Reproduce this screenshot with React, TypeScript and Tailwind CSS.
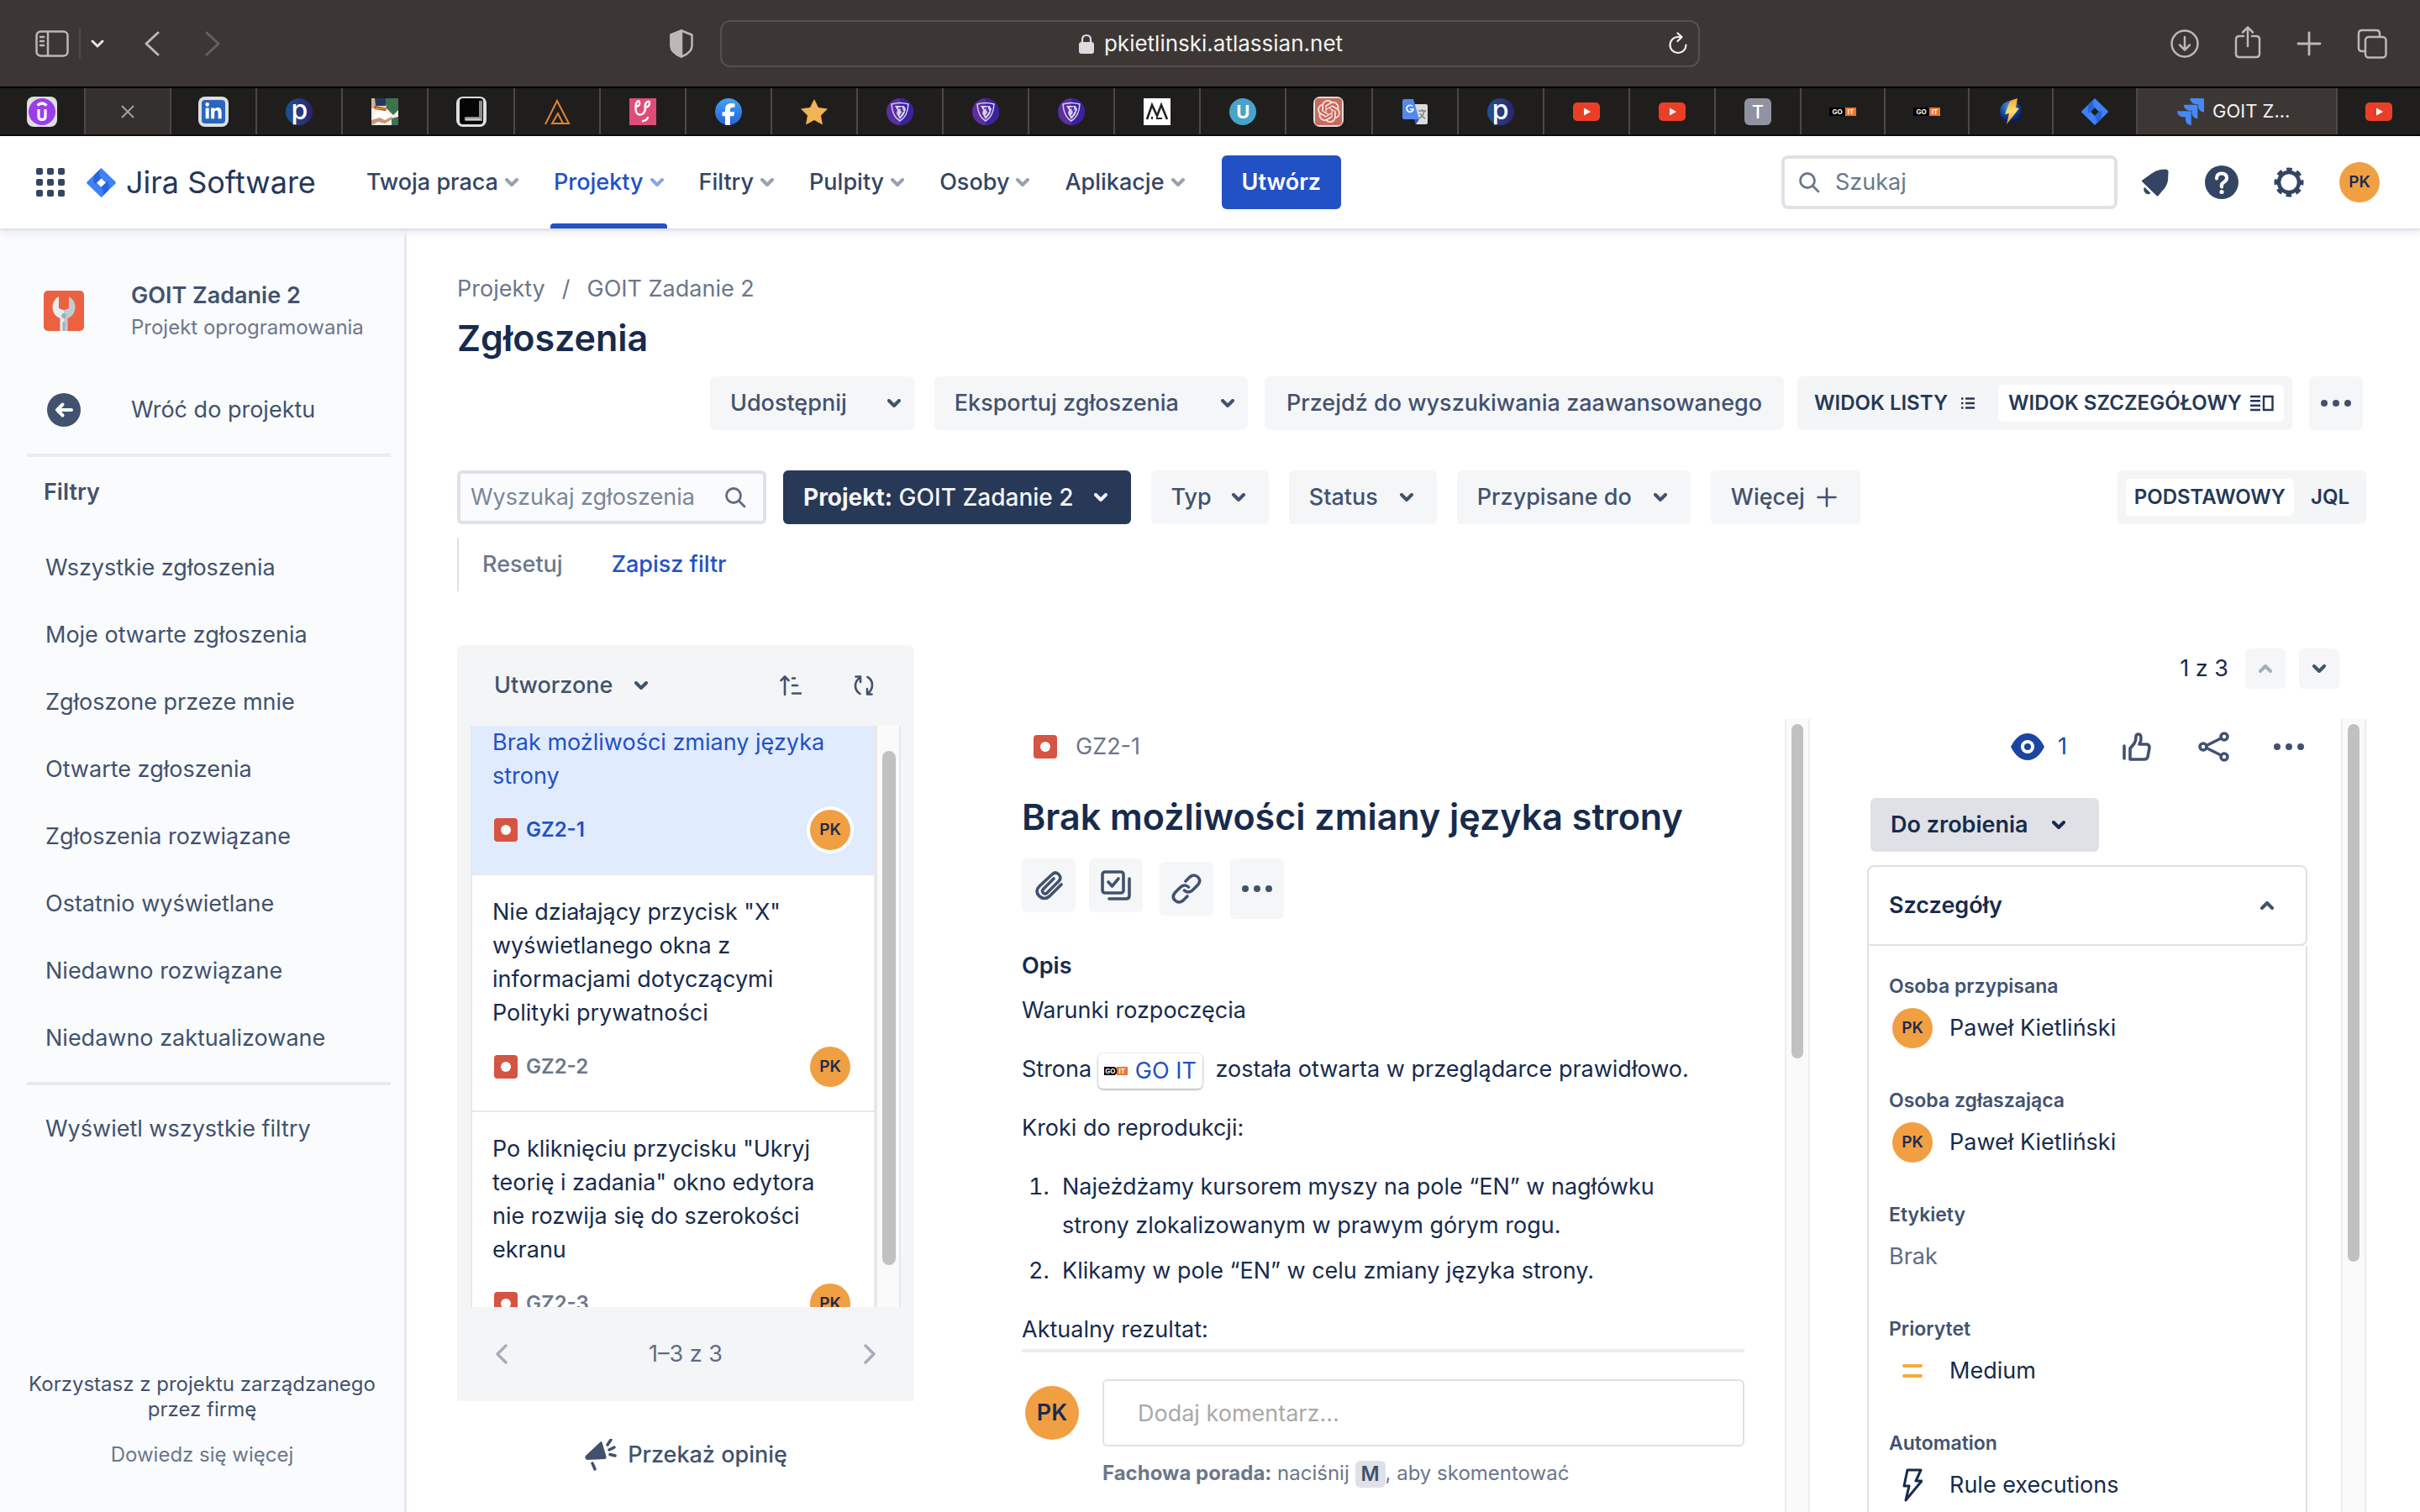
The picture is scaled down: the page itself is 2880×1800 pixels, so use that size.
import React from "react";
import { FaLinkedinIn, FaFacebookF } from "react-icons/fa6";
import { SiOpenai } from "react-icons/si";

type Kids = { children?: React.ReactNode };

function Chevron({ dir = "down", className = "" }: { dir?: "down" | "up"; className?: string }) {
  return (
    <svg viewBox="0 0 16 10" className={"h-[10px] w-4 shrink-0 " + className} fill="none" stroke="currentColor" strokeWidth="4" strokeLinecap="round" strokeLinejoin="round" aria-hidden="true">
      <path d={dir === "down" ? "M2 2l6 6 6-6" : "M2 8l6-6 6 6"} />
    </svg>
  );
}

function Dots({ className = "" }: { className?: string }) {
  return (
    <svg viewBox="0 0 36 8" className={"h-2 w-9 shrink-0 " + className} fill="currentColor" aria-hidden="true">
      <circle cx="4" cy="4" r="4" />
      <circle cx="18" cy="4" r="4" />
      <circle cx="32" cy="4" r="4" />
    </svg>
  );
}

function SearchIcon() {
  return (
    <svg viewBox="0 0 26 26" className="h-[26px] w-[26px] shrink-0" fill="none" stroke="currentColor" strokeWidth="2.800" strokeLinecap="round" aria-hidden="true">
      <circle cx="11" cy="11" r="8.500" />
      <path d="M17.500 17.500l6.500 6.500" />
    </svg>
  );
}

function BugIcon() {
  return (
    <svg viewBox="0 0 28 28" className="h-7 w-7 shrink-0" role="img" aria-label="Błąd">
      <rect width="28" height="28" rx="4" fill="#d55442" />
      <circle cx="14" cy="14" r="6" fill="#fff" />
    </svg>
  );
}

function Avatar({ size = "md", ring = false }: { size?: "md" | "lg"; ring?: boolean }) {
  return (
    <span
      className={
        "flex shrink-0 items-center justify-center rounded-full bg-[#f19f43] font-semibold text-[#1c2b4d] " +
        (size === "lg" ? "h-16 w-16 text-[27px] " : "h-12 w-12 text-[19px] ") +
        (ring ? "ring-4 ring-white" : "")
      }
    >
      PK
    </span>
  );
}

/* ---------- tab icons ---------- */

function Plate({ children }: Kids) {
  return <span className="flex h-9 w-9 items-center justify-center overflow-hidden rounded-lg bg-[#dedede]">{children}</span>;
}

function UpIcon() {
  return (
    <Plate>
      <svg viewBox="0 0 32 32" className="h-8 w-8">
        <circle cx="16" cy="16" r="16" fill="#9b3de8" />
        <path d="M10.500 8.500q5.500-5 11 0M12 13v8.500q0 4 4 4t4-4V13" fill="none" stroke="#fff" strokeWidth="3.200" />
      </svg>
    </Plate>
  );
}

function LinkedinTab() {
  return (
    <Plate>
      <span className="flex h-7 w-7 items-center justify-center rounded-sm bg-[#2a66c0] text-white">
        <FaLinkedinIn size={22} />
      </span>
    </Plate>
  );
}

function PIcon() {
  return (
    <span className="flex h-8 w-8 items-center justify-center rounded-full bg-linear-to-r from-[#1f5190] to-[#28246e] pb-1 text-[32px] leading-none font-medium text-white">
      p
    </span>
  );
}

function PhotoTab() {
  return (
    <svg viewBox="0 0 32 32" className="h-8 w-8">
      <rect width="32" height="32" fill="#f3eee8" />
      <path d="M16 0h16v14l-6 6-8-8zM24 24l8-2v10h-8z" fill="#3b7350" />
      <path d="M0 0h5v12H0z" fill="#cdb98f" />
      <path d="M4 0h13v9H5z" fill="#223a5c" />
      <path d="M3 9l15 2-1 4-13-2z" fill="#c53b2c" />
      <path d="M5 12h12" stroke="#e0a53a" strokeWidth="1.500" />
      <path d="M5 15h11l8 7-4 6-12 2-5-8z" fill="#fff" />
      <path d="M0 26l10-3 6 3 8-4 2 2-10 6-8-2-8 4z" fill="#c99672" />
    </svg>
  );
}

function BookTab() {
  return (
    <Plate>
      <svg viewBox="0 0 32 34" className="h-[34px] w-8">
        <rect x="2" y="1" width="28" height="31" rx="4" fill="#050505" />
        <path d="M25 4h4v24H9a3 3 0 0 1 0-5h16z" fill="#8c8c8c" />
        <path d="M9 26h18" stroke="#dcdcdc" strokeWidth="1.500" />
      </svg>
    </Plate>
  );
}

function TriangleTab() {
  return (
    <svg viewBox="0 0 32 32" className="h-8 w-8" fill="none" stroke="#e08434" strokeWidth="2">
      <path d="M2 31L16 3l14 27H10l7-12 6 12" />
    </svg>
  );
}

function PinkTab() {
  return (
    <svg viewBox="0 0 32 32" className="h-8 w-8" fill="none" stroke="#fff" strokeWidth="2.400" strokeLinecap="round">
      <rect width="32" height="32" fill="#e04c78" stroke="none" />
      <path d="M8 10q5-1 4-5t-4 1q-1 6 0 10 2 5 7 3 4-2 4-8V7" />
      <path d="M19 11q5-1 5-5t-4-1q-2 3-1 9M16 27q4 0 6-4" />
    </svg>
  );
}

function FacebookTab() {
  return (
    <span className="flex h-8 w-8 items-end justify-center overflow-hidden rounded-full bg-linear-to-b from-[#45a2f5] to-[#2860d8] text-white">
      <FaFacebookF size={26} />
    </span>
  );
}

function StarTab() {
  return (
    <svg viewBox="0 0 34 32" className="h-8 w-[34px]" fill="#f0b356">
      <path d="M17 1l5 10 11 1.500-8 8 2 11-10-5.500L7 31.500l2-11-8-8L12 11z" strokeLinejoin="round" />
    </svg>
  );
}

function ShieldTab() {
  return (
    <svg viewBox="0 0 32 32" className="h-8 w-8">
      <circle cx="16" cy="16" r="16" fill="#5a2f9e" />
      <path d="M16 0a16 16 0 0 1 0 32z" fill="#3a229c" />
      <path d="M6 7q10-3 20 0-1 15-10 20Q7 22 6 7z" fill="none" stroke="#d9d0f2" strokeWidth="1.500" />
      <path d="M10 9h11l2 4-2 6-5 6-4-7 1-4z" fill="#d9d0f2" />
      <path d="M14 12l4-1-1 3 2 2-3 5M18 11l2 5" fill="none" stroke="#4626a0" strokeWidth="1.300" />
    </svg>
  );
}

function MountainTab() {
  return (
    <svg viewBox="0 0 32 32" className="h-8 w-8" fill="none" stroke="#222" strokeWidth="2.600">
      <rect width="32" height="32" fill="#fff" stroke="none" />
      <path d="M4 25L10 8l6 13 5-13 7 17" />
      <path d="M10 25v-3M15 24h7" strokeWidth="2" />
    </svg>
  );
}

function UTab() {
  return (
    <span className="flex h-8 w-8 items-center justify-center rounded-full bg-[#47a3cc] text-[22px] leading-none font-bold text-white">U</span>
  );
}

function KnotTab() {
  return (
    <Plate>
      <span className="flex h-8 w-8 items-center justify-center rounded-sm bg-[#cb6a5c] text-[#efe3de]">
        <SiOpenai size={27} />
      </span>
    </Plate>
  );
}

function TranslateTab() {
  return (
    <svg viewBox="0 0 32 32" className="h-8 w-8">
      <path d="M12 7h17a2 2 0 0 1 2 2v20a2 2 0 0 1-2 2H17z" fill="#dcdcdc" />
      <path d="M17 31l4-6h-6z" fill="#3c4fc4" />
      <path d="M3 1h11l7 24H3a2 2 0 0 1-2-2V3a2 2 0 0 1 2-2z" fill="#5389ec" />
      <path d="M20 15h9M24.500 13v2M27 15q-1 6-6 9M22 18q2 4 6 6" fill="none" stroke="#71828b" strokeWidth="1.500" />
      <path d="M13 9.500a4 4 0 1 0 1 3.500h-4" fill="none" stroke="#fff" strokeWidth="1.700" />
    </svg>
  );
}

function YoutubeTab() {
  return (
    <svg viewBox="0 0 32 22" className="h-[22px] w-8">
      <rect width="32" height="22" rx="5" fill="#ea3f27" />
      <path d="M13 6.500l8 4.500-8 4.500z" fill="#fff" />
    </svg>
  );
}

function TTab() {
  return <span className="flex h-8 w-8 items-center justify-center rounded-md bg-[#9192a0] text-[22px] leading-none font-medium text-white">T</span>;
}

function GoitMark({ small = false }: { small?: boolean }) {
  return (
    <span className={"flex items-center text-[8px] leading-none font-bold text-white " + (small ? "h-[10px] w-7" : "h-[10px] w-8")}>
      <span className="flex h-full flex-1 items-center justify-center rounded-r-sm bg-black">GO</span>
      <span className="flex h-full w-[13px] items-center justify-center bg-[#e8762f]">IT</span>
    </span>
  );
}

function BoltTab() {
  return (
    <svg viewBox="0 0 32 32" className="h-8 w-8">
      <defs>
        <radialGradient id="orb" cx="0.4" cy="0.25" r="0.8">
          <stop offset="0" stopColor="#4d94dc" />
          <stop offset="0.600" stopColor="#123a8e" />
          <stop offset="1" stopColor="#040f4a" />
        </radialGradient>
        <linearGradient id="flash" x1="0" y1="0" x2="0" y2="1">
          <stop offset="0" stopColor="#f5a13a" />
          <stop offset="0.500" stopColor="#fbe06a" />
          <stop offset="1" stopColor="#f08a2c" />
        </linearGradient>
      </defs>
      <circle cx="16" cy="16" r="13" fill="url(#orb)" />
      <path d="M15 3l9-3-2 11 4 1-15 19 3-13-5 1z" fill="url(#flash)" />
    </svg>
  );
}

function Diamond({ className }: { className: string }) {
  return (
    <svg viewBox="0 0 36 36" className={className} aria-hidden="true">
      <path fillRule="evenodd" d="M18 0l17 16.500a2 2 0 0 1 0 3L18 36 1 19.500a2 2 0 0 1 0-3zM18 12.500L12.500 18l5.500 5.500 5.500-5.500z" fill="#3f82f7" />
      <path d="M18 0q-5 6 0 12.500L10 20q-3-6 0-12z" fill="#2763dc" />
      <path d="M18 36q5-6 0-12.500l8-7.500q3 6 0 12z" fill="#2763dc" />
    </svg>
  );
}

function JiraTab() {
  return (
    <svg viewBox="0 0 24 24" className="h-8 w-8 shrink-0" fill="#4688f5" aria-hidden="true">
      <path d="M11.571 11.513H0a5.218 5.218 0 0 0 5.232 5.215h2.130v2.057A5.215 5.215 0 0 0 12.575 24V12.518a1.005 1.005 0 0 0-1.005-1.005zm5.723-5.756H5.736a5.215 5.215 0 0 0 5.215 5.214h2.129v2.058a5.218 5.218 0 0 0 5.215 5.214V6.758a1.001 1.001 0 0 0-1.001-1.001zM23.013 0H11.455a5.215 5.215 0 0 0 5.215 5.215h2.129v2.057A5.215 5.215 0 0 0 24 12.483V1.005A1.001 1.001 0 0 0 23.013 0Z" />
    </svg>
  );
}

const wideTabs: [string, React.ReactNode][] = [
  ["LinkedIn", <LinkedinTab />],
  ["P", <PIcon />],
  ["Zdjęcie", <PhotoTab />],
  ["Książka", <BookTab />],
  ["Trójkąt", <TriangleTab />],
  ["Kurs", <PinkTab />],
  ["Facebook", <FacebookTab />],
  ["Ulubione", <StarTab />],
  ["Tarcza 1", <ShieldTab />],
  ["Tarcza 2", <ShieldTab />],
  ["Tarcza 3", <ShieldTab />],
  ["Góra", <MountainTab />],
  ["U", <UTab />],
  ["Czat", <KnotTab />],
  ["Tłumacz", <TranslateTab />],
  ["P 2", <PIcon />],
  ["YouTube 1", <YoutubeTab />],
  ["YouTube 2", <YoutubeTab />],
  ["T", <TTab />],
];

const narrowTabs: [string, React.ReactNode][] = [
  ["GO IT 1", <GoitMark />],
  ["GO IT 2", <GoitMark />],
  ["Błyskawica", <BoltTab />],
  ["Jira", <Diamond className="h-8 w-8" />],
];

function Tab({ label, narrow = false, last = false, children }: { label: string; narrow?: boolean; last?: boolean } & Kids) {
  return (
    <button
      type="button"
      aria-label={label}
      className={
        "flex h-full min-w-0 items-center justify-center border-[#4b4846] bg-[#201e1d] " +
        (narrow ? "flex-[100] " : "flex-[102] ") +
        (last ? "" : "border-r-2")
      }
    >
      {children}
    </button>
  );
}

function BrowserChrome() {
  return (
    <div className="shrink-0">
      <div className="grid h-[103px] grid-cols-[857fr_1166fr_857fr] items-center bg-[#3c3734] text-[#bcb8b5]">
        <div className="flex items-center pr-8 pl-[42px]">
          <button type="button" aria-label="Pasek boczny">
            <svg viewBox="0 0 40 32" className="h-8 w-10" fill="none" stroke="currentColor" strokeWidth="2.500" strokeLinecap="round">
              <rect x="1.500" y="1.500" width="37" height="29" rx="5" />
              <path d="M15 2v28M6 8h4M6 13h4M6 18h4" />
            </svg>
          </button>
          <span className="mx-3 h-9 w-[2px] bg-[#504b48]" />
          <button type="button" aria-label="Grupy kart" className="text-[#e6e3e1]">
            <svg viewBox="0 0 16 10" className="h-[10px] w-4" fill="none" stroke="currentColor" strokeWidth="3" strokeLinecap="round" strokeLinejoin="round">
              <path d="M2 2l6 6 6-6" />
            </svg>
          </button>
          <button type="button" aria-label="Wstecz" className="ml-12">
            <svg viewBox="0 0 18 30" className="h-[30px] w-[18px]" fill="none" stroke="currentColor" strokeWidth="3" strokeLinecap="round" strokeLinejoin="round">
              <path d="M16 2L2 15l14 13" />
            </svg>
          </button>
          <button type="button" aria-label="Dalej" className="ml-[54px] text-[#66615e]">
            <svg viewBox="0 0 18 30" className="h-[30px] w-[18px]" fill="none" stroke="currentColor" strokeWidth="3" strokeLinecap="round" strokeLinejoin="round">
              <path d="M2 2l14 13L2 28" />
            </svg>
          </button>
          <button type="button" aria-label="Raport prywatności" className="ml-auto">
            <svg viewBox="0 0 28 34" className="h-[34px] w-7" fill="none" stroke="currentColor" strokeWidth="2.500" strokeLinejoin="round">
              <path d="M14 1.500l12.500 5v13q0 8-12.500 13Q1.500 27.500 1.500 19.500v-13z" />
              <path d="M14 1.500v31Q1.500 27.500 1.500 19.500v-13z" fill="currentColor" />
            </svg>
          </button>
        </div>
        <div className="flex h-14 items-center rounded-xl border-2 border-[#55504d] px-3 text-[26px] text-[#f4f2f1]">
          <span className="flex flex-1 items-center justify-center gap-3 pl-[26px]">
            <svg viewBox="0 0 18 24" className="h-6 w-[18px]" aria-hidden="true">
              <rect x="0" y="10" width="18" height="14" rx="3" fill="#dedbe0" />
              <path d="M4 11V7q0-5 5-5t5 5v4" fill="none" stroke="#dedbe0" strokeWidth="2.200" />
            </svg>
            pkietlinski.atlassian.net
          </span>
          <button type="button" aria-label="Odśwież">
            <svg viewBox="0 0 24 28" className="h-7 w-6" fill="none" stroke="currentColor" strokeWidth="2.200" strokeLinecap="round" strokeLinejoin="round">
              <path d="M21.500 15.500a9.500 9.500 0 1 1-9.500-9.500h4M11.500 1.500L16.500 6l-5 5" />
            </svg>
          </button>
        </div>
        <div className="flex items-center justify-end gap-[41px] pr-[39px]">
          <button type="button" aria-label="Pobrane">
            <svg viewBox="0 0 36 36" className="h-9 w-9" fill="none" stroke="currentColor" strokeWidth="2.500" strokeLinecap="round" strokeLinejoin="round">
              <circle cx="18" cy="18" r="15.500" />
              <path d="M18 10v15M12 19.500l6 6 6-6" />
            </svg>
          </button>
          <button type="button" aria-label="Udostępnij stronę">
            <svg viewBox="0 0 32 40" className="mb-1 h-10 w-8" fill="none" stroke="currentColor" strokeWidth="2.500" strokeLinecap="round" strokeLinejoin="round">
              <path d="M11 13H6q-4 0-4 4v17q0 4 4 4h20q4 0 4-4V17q0-4-4-4h-5M16 25V3M10 8.500L16 2.500l6 6" />
            </svg>
          </button>
          <button type="button" aria-label="Nowa karta">
            <svg viewBox="0 0 32 32" className="h-8 w-8" fill="none" stroke="currentColor" strokeWidth="2.800" strokeLinecap="round">
              <path d="M16 3v26M3 16h26" />
            </svg>
          </button>
          <button type="button" aria-label="Przegląd kart">
            <svg viewBox="0 0 36 36" className="h-9 w-9" fill="none" stroke="currentColor" strokeWidth="2.500" strokeLinejoin="round">
              <rect x="10" y="10" width="24.500" height="24.500" rx="4" />
              <path d="M9 27H6q-4 0-4-4V6q0-4 4-4h17q4 0 4 4v3" />
            </svg>
          </button>
        </div>
      </div>
      <div className="flex h-[59px] border-y-2 border-black bg-[#201e1d]">
        <Tab label="Upwork"><UpIcon /></Tab>
        <button type="button" aria-label="Zamknij kartę" className="flex h-full flex-[102] items-center justify-center border-r-2 border-[#4b4846] bg-[#34302e] text-[#a5a19f]">
          <svg viewBox="0 0 16 16" className="h-4 w-4" fill="none" stroke="currentColor" strokeWidth="2">
            <path d="M1 1l14 14M15 1L1 15" />
          </svg>
        </button>
        {wideTabs.map(([label, icon]) => (
          <Tab key={label} label={label}>{icon}</Tab>
        ))}
        {narrowTabs.map(([label, icon]) => (
          <Tab key={label} label={label} narrow>{icon}</Tab>
        ))}
        <button type="button" className="flex h-full flex-[240] items-center justify-center border-r-2 border-[#4b4846] bg-[#3c3734] text-[22px] text-[#f4f2f1]">
          <span className="flex items-center gap-[10px] pr-2">
            <JiraTab />
            GOIT Z...
          </span>
        </button>
        <Tab label="YouTube 3" narrow last><YoutubeTab /></Tab>
      </div>
    </div>
  );
}

/* ---------- Jira header ---------- */

const navItems = ["Twoja praca", "Projekty", "Filtry", "Pulpity", "Osoby", "Aplikacje"];

function JiraHeader() {
  return (
    <header className="relative z-10 flex h-[110px] shrink-0 items-center bg-white pr-12 pl-[43px] shadow-[0_2px_2px_#dcdee3,0_6px_8px_#eceef2]">
      <button type="button" aria-label="Przełącznik aplikacji" className="mr-[26px] text-[#344563]">
        <svg viewBox="0 0 34 34" className="h-[34px] w-[34px]" fill="currentColor">
          {[0, 13, 26].map((y) => [0, 13, 26].map((x) => <rect key={x + "-" + y} x={x} y={y} width="8" height="8" rx="2" />))}
        </svg>
      </button>
      <a href="#jira" className="flex items-center gap-3 text-[36px] text-[#253858]">
        <Diamond className="h-[35px] w-[35px]" />
        Jira Software
      </a>
      <nav className="ml-[60px] flex h-full items-center gap-[42px]">
        {navItems.map((item) => {
          const active = item === "Projekty";
          return (
            <button
              key={item}
              type="button"
              className={"relative flex h-full items-center gap-2 text-[27px] font-medium " + (active ? "text-[#2251c5]" : "text-[#344563]")}
            >
              {item}
              <Chevron className="opacity-50" />
              {active && <span className="absolute -inset-x-1 bottom-0 h-[6px] rounded-t-sm bg-[#2251c5]" />}
            </button>
          );
        })}
      </nav>
      <button type="button" className="ml-11 h-16 rounded-md bg-[#2251c5] px-6 text-[27px] font-semibold text-white">Utwórz</button>
      <label className="ml-auto flex h-16 w-[400px] items-center gap-[18px] rounded-lg border-4 border-[#dfe1e6] px-4 text-[#6b778c]">
        <SearchIcon />
        <input type="text" aria-label="Szukaj" placeholder="Szukaj" className="w-full min-w-0 bg-transparent text-[27px] outline-none placeholder:text-[#6b778c]" />
      </label>
      <div className="ml-7 flex items-center gap-[42px] text-[#344563]">
        <button type="button" aria-label="Powiadomienia">
          <svg viewBox="0 0 34 34" className="h-[34px] w-[34px]" fill="currentColor">
            <path d="M30 1.500q3 1 2.500 4l-.500 9q-1 7-6 12l-5.500 6.500q-1 1-2 0L1.500 16.500q-1-1 0-2L12 7q5-4 11-5z" />
            <path d="M4 22.500l7.500 7.500q-3 2.500-6 0-3.500-3-1.500-7.500z" />
          </svg>
        </button>
        <button type="button" aria-label="Pomoc">
          <svg viewBox="0 0 40 40" className="h-10 w-10" fill="none">
            <circle cx="20" cy="20" r="20" fill="currentColor" />
            <path d="M14 15.500q0-6 6-6t6 5.500q0 3-3.500 5T20 25.500" stroke="#fff" strokeWidth="4" strokeLinecap="round" />
            <circle cx="20" cy="31.500" r="2.600" fill="#fff" />
          </svg>
        </button>
        <button type="button" aria-label="Ustawienia">
          <svg viewBox="0 0 36 36" className="h-9 w-9" fill="none" stroke="currentColor">
            <circle cx="18" cy="18" r="12" strokeWidth="4.500" />
            <circle cx="18" cy="18" r="15.500" strokeWidth="4" strokeDasharray="6.600 5.573" strokeDashoffset="3.300" />
          </svg>
        </button>
        <button type="button" aria-label="Twój profil"><Avatar /></button>
      </div>
    </header>
  );
}

/* ---------- sidebar ---------- */

const filters = [
  "Wszystkie zgłoszenia",
  "Moje otwarte zgłoszenia",
  "Zgłoszone przeze mnie",
  "Otwarte zgłoszenia",
  "Zgłoszenia rozwiązane",
  "Ostatnio wyświetlane",
  "Niedawno rozwiązane",
  "Niedawno zaktualizowane",
];

function Sidebar() {
  return (
    <aside className="flex w-[484px] shrink-0 flex-col border-r-3 border-[#e6e8ec] bg-[#fafbfc] pt-[60px] text-[27px] text-[#42526e]">
      <div className="flex items-center gap-14 pl-[52px]">
        <svg viewBox="0 0 48 48" className="h-12 w-12 shrink-0" aria-hidden="true">
          <rect width="48" height="48" rx="5" fill="#ec6140" />
          <path d="M19.500 48V33q-9-4-9-13 0-9 7.500-13v14l5 2h2V48z" fill="#e8edf1" />
          <path d="M28.500 48V33q9-4 9-13 0-9-7.500-13v14l-5 2h-1V48z" fill="#c1cbd3" />
          <path d="M20 7v13h8V7z" fill="#ec6140" />
          <circle cx="24" cy="30" r="3" fill="#9fb0bd" />
          <path d="M24 37v11" stroke="#9fb0bd" strokeWidth="3" />
        </svg>
        <div>
          <div className="leading-10 font-semibold">GOIT Zadanie 2</div>
          <div className="text-[24px] leading-9 text-[#6b778c]">Projekt oprogramowania</div>
        </div>
      </div>
      <a href="#projekt" className="mt-10 flex h-20 items-center gap-15 pl-14">
        <svg viewBox="0 0 40 40" className="h-10 w-10 shrink-0" aria-hidden="true">
          <circle cx="20" cy="20" r="20" fill="#42526e" />
          <path d="M29 20H12M18.500 13.500L12 20l6.500 6.500" fill="none" stroke="#fff" strokeWidth="4" strokeLinecap="round" strokeLinejoin="round" />
        </svg>
        Wróć do projektu
      </a>
      <hr className="mt-3 mr-4 ml-8 border-t-4 border-[#ebecf0]" />
      <h2 className="mt-[22px] pl-[52px] leading-10 font-semibold">Filtry</h2>
      <ul className="mt-[30px]">
        {filters.map((f) => (
          <li key={f}>
            <a href="#filtr" className="flex h-20 items-center pl-[54px]">{f}</a>
          </li>
        ))}
      </ul>
      <hr className="mt-3 mr-4 ml-8 border-t-4 border-[#e8e9ec]" />
      <a href="#filtry" className="mt-3 flex h-20 items-center pl-[54px]">Wyświetl wszystkie filtry</a>
      <div className="mt-auto flex flex-col items-center gap-6 px-4 pb-[53px] text-center text-[24px] leading-[30px]">
        <p>Korzystasz z projektu zarządzanego przez firmę</p>
        <a href="#wiecej" className="text-[#6b778c]">Dowiedz się więcej</a>
      </div>
    </aside>
  );
}

/* ---------- toolbar rows ---------- */

function GrayButton({ children, className = "px-[26px]" }: { className?: string } & Kids) {
  return (
    <button type="button" className={"flex h-16 shrink-0 items-center rounded-md bg-[#f5f6f8] text-[27px] font-medium text-[#42526e] " + className}>
      {children}
    </button>
  );
}

function ActionRow() {
  return (
    <div className="flex items-center justify-end pr-1">
      <GrayButton className="mr-6 gap-12 pr-4 pl-6">Udostępnij <Chevron /></GrayButton>
      <GrayButton className="mr-5 gap-[50px] pr-4 pl-6">Eksportuj zgłoszenia <Chevron /></GrayButton>
      <GrayButton>Przejdź do wyszukiwania zaawansowanego</GrayButton>
      <div className="ml-4 flex h-16 items-center gap-7 rounded-md bg-[#f4f5f7] pr-[10px] pl-5 text-[24px] font-semibold text-[#253858]">
        <button type="button" className="flex items-center gap-4">
          WIDOK LISTY
          <svg viewBox="0 0 16 14" className="h-[14px] w-4" fill="none" stroke="currentColor" strokeWidth="2.400" aria-hidden="true">
            <path d="M5 1.500h11M5 7h11M5 12.500h11M0 1.500h2.500M0 7h2.500M0 12.500h2.500" />
          </svg>
        </button>
        <button type="button" className="flex h-11 items-center gap-[10px] rounded-md bg-white px-3">
          WIDOK SZCZEGÓŁOWY
          <svg viewBox="0 0 28 20" className="h-5 w-7" fill="none" stroke="currentColor" strokeWidth="2.400" aria-hidden="true">
            <path d="M0 2h12M0 7.300h12M0 12.700h12M0 18h12M16 2h10.500v16H16z" />
          </svg>
        </button>
      </div>
      <button type="button" aria-label="Więcej działań" className="ml-5 flex h-16 w-16 items-center justify-center rounded-md bg-[#f5f6f8] text-[#42526e]"><Dots /></button>
    </div>
  );
}

function FilterRow() {
  return (
    <div className="mt-12 flex items-center gap-6">
      <label className="-mr-1 flex h-16 w-[368px] shrink-0 items-center rounded-md border-4 border-[#dfe1e6] bg-[#fafbfc] pr-5 pl-3 text-[#5e6c84]">
        <input type="text" aria-label="Wyszukaj zgłoszenia" placeholder="Wyszukaj zgłoszenia" className="w-full min-w-0 bg-transparent text-[27px] outline-none placeholder:text-[#7a869a]" />
        <SearchIcon />
      </label>
      <button type="button" className="flex h-16 shrink-0 items-center gap-6 rounded-md bg-[#283857] pr-7 pl-6 text-[28px] font-medium text-[#f4f5f7]">
        <span><b className="font-bold">Projekt:</b> GOIT Zadanie 2</span>
        <Chevron />
      </button>
      <GrayButton className="gap-6 pr-7 pl-6">Typ <Chevron /></GrayButton>
      <GrayButton className="gap-[26px] pr-7 pl-6">Status <Chevron /></GrayButton>
      <GrayButton className="gap-[26px] pr-7 pl-6">Przypisane do <Chevron /></GrayButton>
      <GrayButton className="gap-[14px] pr-7 pl-6">
        Więcej
        <svg viewBox="0 0 24 24" className="h-6 w-6" fill="none" stroke="currentColor" strokeWidth="2.600" strokeLinecap="round" aria-hidden="true"><path d="M12 1.500v21M1.500 12h21" /></svg>
      </GrayButton>
      <div className="ml-auto flex h-16 items-center rounded-md bg-[#f4f5f7] pl-[10px] text-[24px] font-semibold text-[#253858]">
        <button type="button" className="h-11 rounded-md bg-white px-[10px]">PODSTAWOWY</button>
        <button type="button" className="px-5">JQL</button>
      </div>
    </div>
  );
}

/* ---------- issue list ---------- */

const issues = [
  { key: "GZ2-1", title: "Brak możliwości zmiany języka strony", selected: true },
  { key: "GZ2-2", title: "Nie działający przycisk \"X\" wyświetlanego okna z informacjami dotyczącymi Polityki prywatności", selected: false },
  { key: "GZ2-3", title: "Po kliknięciu przycisku \"Ukryj teorię i zadania\" okno edytora nie rozwija się do szerokości ekranu", selected: false },
];

function IssueList() {
  return (
    <section className="w-[544px] shrink-0">
      <div className="rounded-t-lg bg-[#f4f5f7] px-4">
        <div className="flex h-24 items-center pr-8 pl-7 text-[#42526e]">
          <button type="button" className="flex items-center gap-[26px] text-[27px] font-medium">Utworzone <Chevron /></button>
          <button type="button" aria-label="Kolejność sortowania" className="mr-[62px] ml-auto">
            <svg viewBox="0 0 26 24" className="h-6 w-[26px]" fill="none" stroke="currentColor" strokeWidth="2.600" strokeLinecap="round" strokeLinejoin="round">
              <path d="M6 23V2M1.500 6L6 1.500 10.500 6M15 3.500h3M15 12h6M15 21.500h10" />
            </svg>
          </button>
          <button type="button" aria-label="Odśwież listę">
            <svg viewBox="0 0 24 24" className="h-6 w-6" fill="none" stroke="currentColor" strokeWidth="2.600" strokeLinecap="round" strokeLinejoin="round">
              <path d="M2.500 1.500H8V8M8 2Q2 6 2 12.500q0 6 5.500 9.500M21.500 22.500H16V16M16 22q6-4 6-10.500Q22 5 16.500 2" />
            </svg>
          </button>
        </div>
        <div className="flex h-[692px] overflow-hidden border-x-2 border-[#e6e8ec] bg-[#fafafa]">
          <ul className="min-w-0 flex-1">
            {issues.map((it) => (
              <li
                key={it.key}
                className={
                  "flex flex-col border-b-2 border-[#e8e9ee] pr-7 pb-7 pl-6 text-[27px] leading-10 " +
                  (it.selected ? "bg-[#e0ebfd] text-[#2251c5]" : "bg-white pt-6 text-[#172b4d]")
                }
              >
                <a href="#zgloszenie" className="max-w-[410px]">{it.title}</a>
                <div className="mt-5 flex items-center pl-[2px]">
                  <BugIcon />
                  <span className={"ml-[10px] text-[24px] font-semibold " + (it.selected ? "" : "text-[#6b778c]")}>{it.key}</span>
                  <span className="ml-auto"><Avatar ring={it.selected} /></span>
                </div>
              </li>
            ))}
          </ul>
          <div className="w-[30px] shrink-0 border-l-4 border-[#e6e8ec] bg-[#fafafa] px-[6px] pt-[30px]">
            <div className="h-[612px] w-4 rounded-full bg-[#c1c1c1]" />
          </div>
        </div>
        <div className="flex h-[112px] items-center justify-between px-[30px] text-[27px] text-[#5e6c84]">
          <button type="button" aria-label="Poprzednia strona" className="text-[#a5adba]">
            <svg viewBox="0 0 14 24" className="h-6 w-[14px]" fill="none" stroke="currentColor" strokeWidth="3.500" strokeLinecap="round" strokeLinejoin="round"><path d="M12 2L2 12l10 10" /></svg>
          </button>
          1–3 z 3
          <button type="button" aria-label="Następna strona" className="text-[#a5adba]">
            <svg viewBox="0 0 14 24" className="h-6 w-[14px]" fill="none" stroke="currentColor" strokeWidth="3.500" strokeLinecap="round" strokeLinejoin="round"><path d="M2 2l10 10L2 22" /></svg>
          </button>
        </div>
      </div>
      <button type="button" className="mt-11 flex w-full items-center justify-center gap-3 text-[27px] leading-10 font-medium text-[#42526e]">
        <svg viewBox="0 0 40 38" className="h-[38px] w-10" fill="none" stroke="currentColor" strokeWidth="3.500" strokeLinecap="round" aria-hidden="true">
          <path d="M19 4q1.500-2 2.500 0l5 17q.500 3-2 3L4 25q-4-1-2-5z" fill="currentColor" stroke="none" />
          <path d="M10 29l3 7M28 7l4-6M30 13l6-3M31 18.500l6 1.500" />
        </svg>
        Przekaż opinię
      </button>
    </section>
  );
}

/* ---------- issue detail ---------- */

function ToolButton({ label, className, children }: { label: string; className: string } & Kids) {
  return (
    <button type="button" aria-label={label} className={"flex w-16 items-center justify-center rounded-md bg-[#f5f6f8] text-[#42526e] " + className}>
      {children}
    </button>
  );
}

function IssueBody() {
  return (
    <article className="min-w-0 flex-1 pr-12 text-[27px] leading-[46px] text-[#172b4d]">
      <div className="flex h-[66px] items-center gap-[22px] pl-[14px] text-[#6b778c]">
        <BugIcon />
        <a href="#gz2-1">GZ2-1</a>
      </div>
      <h2 className="mt-[22px] text-[43px] leading-14 font-semibold">Brak możliwości zmiany języka strony</h2>
      <div className="mt-[22px] flex h-[72px] items-start">
        <ToolButton label="Załącz" className="mr-4 h-16">
          <svg viewBox="0 0 36 36" className="h-9 w-9" fill="none" stroke="currentColor" strokeWidth="3.600" strokeLinecap="round" strokeLinejoin="round">
            <path d="M33 17L19 31q-6 5-12 0-6-6 0-12L22 5q4-4 8 0t0 8L16 27q-2 2-4.500 0-2-2.500 0-4.500L24 10" />
          </svg>
        </ToolButton>
        <ToolButton label="Dodaj zadanie podrzędne" className="mr-5 h-16">
          <svg viewBox="0 0 36 36" className="h-9 w-9" fill="none" stroke="currentColor" strokeWidth="3.600" strokeLinecap="round" strokeLinejoin="round">
            <rect x="2" y="2" width="25" height="25" rx="3" />
            <path d="M9 14l4.500 5L21 10M34 10v20q0 4-4 4H10" />
          </svg>
        </ToolButton>
        <ToolButton label="Powiąż zgłoszenie" className="mt-1 mr-5 h-16">
          <svg viewBox="0 0 36 36" className="h-9 w-9" fill="none" stroke="currentColor" strokeWidth="3.600" strokeLinecap="round">
            <path d="M17 9l5-5q5-4 9.500 0t0 9.500L25 20q-5 4-9.500 0M19 27l-5 5q-5 4-9.500 0t0-9.500L11 16q5-4 9.500 0" />
          </svg>
        </ToolButton>
        <ToolButton label="Więcej opcji" className="h-[72px]"><Dots /></ToolButton>
      </div>
      <h3 className="mt-[33px] font-semibold">Opis</h3>
      <div className="mt-[7px] space-y-6">
        <p>Warunki rozpoczęcia</p>
        <p>
          Strona{" "}
          <a href="#goit" className="mr-2 inline-flex h-[42px] items-center gap-[9px] rounded-md px-[7px] align-middle leading-10 text-[#2251c5] shadow-[0_1px_3px_#8d95a8]">
            <GoitMark small />
            GO IT
          </a>{" "}
          została otwarta w przeglądarce prawidłowo.
        </p>
        <p>Kroki do reprodukcji:</p>
        <ol className="list-decimal space-y-2 pl-10 marker:text-[#172b4d]">
          <li className="max-w-[740px] pl-2">Najeżdżamy kursorem myszy na pole “EN” w nagłówku strony zlokalizowanym w prawym górym rogu.</li>
          <li className="pl-2">Klikamy w pole “EN” w celu zmiany języka strony.</li>
        </ol>
        <p>Aktualny rezultat:</p>
      </div>
      <div className="border-t-4 border-[#ebecf0] pt-8">
        <div className="flex items-center gap-7 pl-1">
          <Avatar size="lg" />
          <input type="text" aria-label="Dodaj komentarz" placeholder="Dodaj komentarz..." className="h-20 min-w-0 flex-1 rounded-md border-2 border-[#dfe1e6] px-10 text-[27px] outline-none placeholder:text-[#a9a9a9]" />
        </div>
        <p className="mt-3 pl-24 text-[24px] leading-10 text-[#6b778c]">
          <b className="font-bold">Fachowa porada:</b> naciśnij{" "}
          <kbd className="inline-flex h-8 w-9 items-center justify-center rounded-md bg-[#dfe1e6] align-middle font-[Inter] font-semibold text-[#42526e]">M</kbd>, aby skomentować
        </p>
      </div>
    </article>
  );
}

function ScrollTrack({ children }: Kids) {
  return <div className="w-[30px] shrink-0 border-x-2 border-[#ededed] bg-[#fafafa] px-[6px] pt-[6px]">{children}</div>;
}

function Field({ label, icon, value, muted = false }: { label: string; icon?: React.ReactNode; value: string; muted?: boolean }) {
  return (
    <div className="h-[136px]">
      <dt className="text-[23px] leading-10 font-semibold text-[#42526e]">{label}</dt>
      <dd className={"mt-[6px] flex h-12 items-center text-[27px] " + (muted ? "text-[#5e6c84]" : "text-[#172b4d]")}>
        {icon && <span className="mr-5 ml-1 flex w-12 justify-center">{icon}</span>}
        {value}
      </dd>
    </div>
  );
}

function IssueSide() {
  return (
    <aside className="w-[632px] shrink-0 pr-10 pl-[68px]">
      <div className="flex h-[66px] items-center justify-end text-[27px] text-[#42526e]">
        <button type="button" className="flex items-center gap-4 text-[#1c45a3]">
          <svg viewBox="0 0 40 32" className="h-8 w-10" aria-hidden="true">
            <path d="M20 0q12 0 20 16-8 16-20 16T0 16Q8 0 20 0z" fill="currentColor" />
            <circle cx="20" cy="16" r="8" fill="#fff" />
            <circle cx="20" cy="16" r="4" fill="currentColor" />
          </svg>
          1
        </button>
        <button type="button" aria-label="Głosuj" className="ml-[66px]">
          <svg viewBox="0 0 34 34" className="h-[34px] w-[34px]" fill="none" stroke="currentColor" strokeWidth="3.600" strokeLinecap="round" strokeLinejoin="round">
            <path d="M2 16v15M9 32V19l5-6q2-3 2-8 0-3 3-3t3 5q0 4-2 7h8q4 0 4 4l-2 11q-1 3-4 3z" />
          </svg>
        </button>
        <button type="button" aria-label="Udostępnij zgłoszenie" className="ml-14">
          <svg viewBox="0 0 38 36" className="h-9 w-[38px]" fill="none" stroke="currentColor" strokeWidth="3.600">
            <circle cx="6" cy="18" r="4" />
            <circle cx="31" cy="6" r="4" />
            <circle cx="31" cy="30" r="4" />
            <path d="M10 16.500L27 8M10 19.500L27 28" />
          </svg>
        </button>
        <button type="button" aria-label="Działania" className="mr-1 ml-[52px]"><Dots /></button>
      </div>
      <button type="button" className="mt-7 ml-1 flex h-16 items-center gap-7 rounded-md bg-[#dfe1e6] pr-10 pl-6 text-[27px] font-semibold text-[#172b4d]">
        Do zrobienia <Chevron />
      </button>
      <div className="mt-4 flex h-24 items-center justify-between rounded-lg rounded-bl-none border-2 border-[#dfe1e6] pr-[38px] pl-6">
        <h3 className="text-[27px] font-semibold text-[#172b4d]">Szczegóły</h3>
        <button type="button" aria-label="Zwiń szczegóły" className="flex text-[#42526e]"><Chevron dir="up" /></button>
      </div>
      <dl className="border-x-2 border-[#dfe1e6] pt-7 pl-6">
        <Field label="Osoba przypisana" icon={<Avatar />} value="Paweł Kietliński" />
        <Field label="Osoba zgłaszająca" icon={<Avatar />} value="Paweł Kietliński" />
        <Field label="Etykiety" value="Brak" muted />
        <Field
          label="Priorytet"
          value="Medium"
          icon={
            <svg viewBox="0 0 24 16" className="h-4 w-6" stroke="#f2ab3c" strokeWidth="4" strokeLinecap="round" aria-hidden="true"><path d="M2 2h20M2 14h20" /></svg>
          }
        />
        <Field
          label="Automation"
          value="Rule executions"
          icon={
            <svg viewBox="0 0 24 40" className="h-10 w-6" fill="none" stroke="#172b4d" strokeWidth="3" strokeLinejoin="round" aria-hidden="true"><path d="M6 2h16l-6 13h7L4 38l4-17H2z" /></svg>
          }
        />
      </dl>
    </aside>
  );
}

function IssueDetail() {
  return (
    <section className="ml-32 flex min-w-0 flex-1 flex-col">
      <div className="flex h-[88px] shrink-0 items-start justify-end gap-4 pt-1 pr-8 text-[27px] text-[#172b4d]">
        <span className="mr-1 leading-[48px]">1 z 3</span>
        <button type="button" aria-label="Poprzednie zgłoszenie" className="flex h-12 w-12 items-center justify-center rounded-md bg-[#f5f6f8] text-[#a5adba]"><Chevron dir="up" /></button>
        <button type="button" aria-label="Następne zgłoszenie" className="flex h-12 w-12 items-center justify-center rounded-md bg-[#f5f6f8] text-[#42526e]"><Chevron /></button>
      </div>
      <div className="flex min-h-0 flex-1 overflow-hidden">
        <IssueBody />
        <ScrollTrack><div className="h-[398px] w-full rounded-full bg-[#c1c1c1]" /></ScrollTrack>
        <IssueSide />
        <ScrollTrack><div className="h-[640px] w-full rounded-full bg-[#c1c1c1]" /></ScrollTrack>
      </div>
    </section>
  );
}

export default function App() {
  return (
    <div className="flex h-screen flex-col overflow-hidden bg-white font-[Inter,'Liberation_Sans',sans-serif]">
      <BrowserChrome />
      <JiraHeader />
      <div className="flex min-h-0 flex-1">
        <Sidebar />
        <main className="flex min-w-0 flex-1 flex-col pt-[52px] pr-16 pl-[60px]">
          <nav aria-label="Okruszki" className="flex gap-5 text-[27px] leading-10 text-[#6b778c]">
            <a href="#projekty">Projekty</a>
            <span>/</span>
            <a href="#goit-zadanie">GOIT Zadanie 2</a>
          </nav>
          <h1 className="mt-[10px] mb-[18px] text-[43px] leading-14 font-semibold text-[#172b4d]">Zgłoszenia</h1>
          <ActionRow />
          <FilterRow />
          <div className="mt-4 flex h-16 shrink-0 items-center gap-[58px] self-start border-l-2 border-[#dfe1e6] pl-7 text-[27px] font-medium">
            <button type="button" className="text-[#6b778c]">Resetuj</button>
            <button type="button" className="text-[#2251c5]">Zapisz filtr</button>
          </div>
          <div className="mt-16 flex min-h-0 flex-1">
            <IssueList />
            <IssueDetail />
          </div>
        </main>
      </div>
    </div>
  );
}
